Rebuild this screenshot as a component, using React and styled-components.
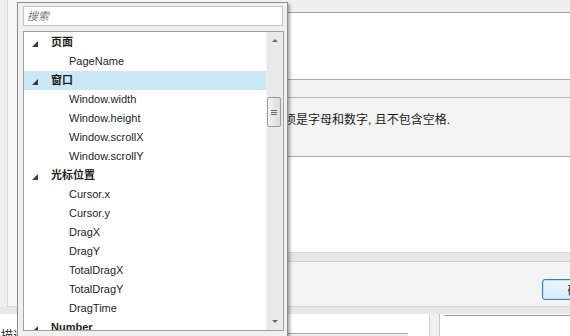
import React from 'react';
import styled, { createGlobalStyle } from 'styled-components';

const GlobalStyle = createGlobalStyle`
  html, body { margin: 0; padding: 0; background: #f0f0f0; }
  body {
    font-family: "Liberation Sans", "Noto Sans CJK SC", sans-serif;
    font-size: 11px;
    color: #1e1e1e;
  }
`;

const groups = [
  { name: '页面', items: ['PageName'] },
  { name: '窗口', items: ['Window.width', 'Window.height', 'Window.scrollX', 'Window.scrollY'], selected: true },
  { name: '光标位置', items: ['Cursor.x', 'Cursor.y', 'DragX', 'DragY', 'TotalDragX', 'TotalDragY', 'DragTime'] },
  { name: 'Number', items: ['Math.abs', 'Math.round'] },
];

export default function App() {
  return (
    <Window>
      <GlobalStyle />
      <Body>
        <LeftCol>
          <ListFrame />
        </LeftCol>
        <RightCol>
          <NameBox />
          <Strip />
          <Message>名称必须是字母和数字, 且不包含空格.</Message>
          <WhiteArea />
          <Band />
          <Footer>
            <Button>确定</Button>
            <Button>取消</Button>
          </Footer>
        </RightCol>
      </Body>
      <LowerBand />
      <BottomRow>
        <LeftPane>
          <PaneLabel>描述</PaneLabel>
          <FieldBox />
        </LeftPane>
        <Splitter />
        <RightPane>
          <PaneTop />
        </RightPane>
      </BottomRow>

      <Popup>
        <Search placeholder="搜索" />
        <List>
          <Rows>
            {groups.map(g => (
              <React.Fragment key={g.name}>
                <GroupRow selected={g.selected}>
                  <Toggle width="6" height="6" viewBox="0 0 6 6">
                    <path d="M6 0 L6 6 L0 6 Z" fill="#3c3c3c" />
                  </Toggle>
                  {g.name}
                </GroupRow>
                {g.items.map(item => <ItemRow key={item}>{item}</ItemRow>)}
              </React.Fragment>
            ))}
          </Rows>
          <ScrollBar>
            <ArrowBtn><Arrow up /></ArrowBtn>
            <Thumb>
              <Grip /><Grip /><Grip />
            </Thumb>
            <ArrowBtn bottom><Arrow /></ArrowBtn>
          </ScrollBar>
        </List>
      </Popup>
    </Window>
  );
}

const Window = styled.div`
  position: relative;
  width: 570px;
  height: 336px;
  overflow: hidden;
  background: #f0f0f0;
`;

const Body = styled.div`
  display: grid;
  grid-template-columns: 240px 1fr;
  height: 307px;
`;

const LeftCol = styled.div`
  padding-left: 7px;
`;

const ListFrame = styled.div`
  height: 100%;
  box-sizing: border-box;
  border-left: 1px solid #d9d9d9;
  border-bottom: 1px solid #d9d9d9;
  background: #f8f8f8;
`;

const RightCol = styled.div`
  display: flex;
  flex-direction: column;
  padding-top: 12px;
  min-width: 0;
`;

const NameBox = styled.div`
  height: 68px;
  box-sizing: border-box;
  background: #fff;
  border-top: 1px solid #a0a0a0;
  border-bottom: 1px solid #ababab;
`;

const Strip = styled.div`
  height: 18px;
  box-sizing: border-box;
  border-bottom: 1px solid #b4b4b4;
  background: #f2f2f2;
`;

const Message = styled.div`
  height: 59px;
  box-sizing: border-box;
  padding: 14px 0 0 8px;
  font-size: 12px;
  line-height: 16px;
  color: #1a1a1a;
  white-space: nowrap;
  background: #f3f3f3;
  border-bottom: 1px solid #ababab;
`;

const WhiteArea = styled.div`
  height: 96px;
  box-sizing: border-box;
  background: #fff;
  border-bottom: 1px solid #d8d8d8;
`;

const Band = styled.div`
  height: 9px;
  box-sizing: border-box;
  background: #e6e6e6;
  border-bottom: 1px solid #cfcfcf;
`;

const Footer = styled.div`
  flex: 1;
  display: flex;
  align-items: flex-start;
  gap: 8px;
  box-sizing: border-box;
  padding: 17px 0 0 302px;
  background: #f3f3f3;
  border-bottom: 1px solid #d8d8d8;
  overflow: hidden;
`;

const Button = styled.button`
  flex: none;
  width: 75px;
  height: 21px;
  box-sizing: border-box;
  border: 1px solid #3c7fb1;
  border-radius: 3px;
  background: linear-gradient(#eaf6fd, #d7eefb);
  box-shadow: inset 0 0 0 1px #bfe3f7;
  font-family: "Liberation Sans", "Noto Sans CJK SC", sans-serif;
  font-size: 12px;
  color: #1a1a1a;
  padding: 0;
`;

const LowerBand = styled.div`
  height: 7px;
  background: #e8e8e8;
`;

const BottomRow = styled.div`
  display: flex;
  height: 22px;
`;

const LeftPane = styled.div`
  flex: 1;
  display: flex;
  align-items: flex-start;
  background: #fff;
`;

const PaneLabel = styled.div`
  padding-top: 15px;
  font-size: 12px;
  line-height: 14px;
  margin-left: 1px;
`;

const FieldBox = styled.div`
  margin: 19px 21px 0 auto;
  width: 220px;
  height: 6px;
  border-top: 1px solid #a8a8a8;
  background: #eeeeee;
`;

const Splitter = styled.div`
  width: 9px;
  background: #f0f0f0;
  border-left: 1px solid #d6d6d6;
  border-right: 1px solid #c8c8c8;
`;

const RightPane = styled.div`
  width: 126px;
  background: #fff;
  padding: 1px 0 0 4px;
`;

const PaneTop = styled.div`
  border-top: 1px solid #9a9a9a;
`;

const Popup = styled.div`
  position: absolute;
  left: 17px;
  top: 2px;
  width: 271px;
  height: 342px;
  box-sizing: border-box;
  padding: 3px 4px 0 5px;
  background: #f0f0f0;
  border: 1px solid #8e8e8e;
  box-shadow: 2px 2px 3px rgba(0, 0, 0, 0.35);
`;

const Search = styled.input`
  display: block;
  width: 260px;
  height: 20px;
  box-sizing: border-box;
  margin: 0;
  padding: 0 0 0 3px;
  border: 1px solid #c4c4c4;
  background: #fff;
  font-family: "Liberation Sans", "Noto Sans CJK SC", sans-serif;
  font-size: 11px;
  outline: none;
  &::placeholder {
    color: #7a7a7a;
    font-style: italic;
  }
`;

const List = styled.div`
  display: flex;
  margin-top: 5px;
  width: 261px;
  height: 300px;
  box-sizing: border-box;
  border: 1px solid #a0a0a0;
  background: #fff;
`;

const Rows = styled.div`
  flex: 1;
  padding-top: 1px;
  overflow: hidden;
`;

const Row = styled.div`
  height: 19px;
  line-height: 19px;
  white-space: nowrap;
`;

const GroupRow = styled(Row)`
  display: flex;
  align-items: center;
  font-weight: bold;
  background: ${p => (p.selected ? '#cbe8f6' : 'transparent')};
`;

const ItemRow = styled(Row)`
  padding-left: 45px;
`;

const Toggle = styled.svg`
  flex: none;
  margin: 3px 13px 0 8px;
`;

const ScrollBar = styled.div`
  width: 17px;
  display: flex;
  flex-direction: column;
  background: #e9e9e9;
  border-left: 1px solid #f2f2f2;
  box-sizing: border-box;
`;

const ArrowBtn = styled.div`
  height: 17px;
  display: flex;
  justify-content: center;
  align-items: center;
  margin-top: ${p => (p.bottom ? 'auto' : '0')};
`;

const Arrow = styled.div`
  width: 0;
  height: 0;
  border-left: 3px solid transparent;
  border-right: 3px solid transparent;
  ${p => (p.up ? 'border-bottom: 3px solid #6a6a6a;' : 'border-top: 3px solid #6a6a6a;')}
`;

const Thumb = styled.div`
  margin: 48px 0 0 0;
  width: 14px;
  height: 30px;
  box-sizing: border-box;
  border: 1px solid #9c9c9c;
  border-radius: 2px;
  background: linear-gradient(to right, #f3f3f3, #dcdcdc);
  display: flex;
  flex-direction: column;
  align-items: center;
  justify-content: center;
  gap: 1px;
`;

const Grip = styled.div`
  width: 6px;
  height: 1px;
  background: #6a6a6a;
`;
